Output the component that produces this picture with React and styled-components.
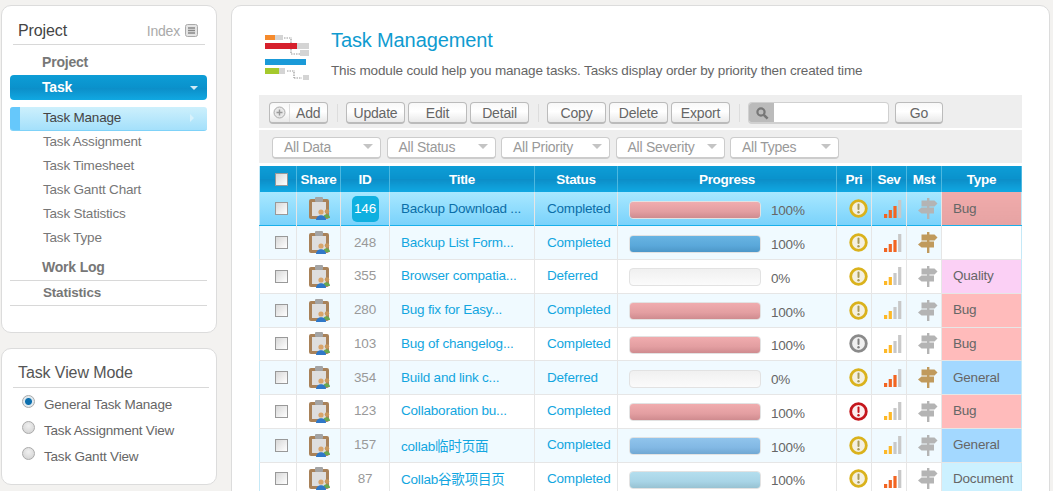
import React from "react";
import styled, { createGlobalStyle } from "styled-components";

const GlobalStyle = createGlobalStyle`
  html, body {
    margin: 0;
    height: 491px;
    overflow: hidden;
    background: #f3f2f0;
    font-family: "Liberation Sans", "Noto Sans CJK SC", Arial, sans-serif;
    font-size: 13.5px;
    letter-spacing: -0.2px;
    color: #666;
  }
`;

const navItems = [
  "Task Manage",
  "Task Assignment",
  "Task Timesheet",
  "Task Gantt Chart",
  "Task Statistics",
  "Task Type",
];

const viewModes = [
  { label: "General Task Manage", checked: true },
  { label: "Task Assignment View" },
  { label: "Task Gantt View" },
];

const typeColors = {
  Bug: "#ffbbbb",
  General: "#a3d8ff",
  Quality: "#fbd0f5",
  Document: "#ccf1ff",
};

const barColors = {
  red: ["#f0acae", "#e39ea1", "#cf8b8f"],
  blue: ["#68b4e2", "#5aa8da", "#4d97c8"],
  sky: ["#90c4ec", "#82b8e4", "#70a8d2"],
  pale: ["#b4deee", "#a8d4e6", "#98c2d2"],
};

const rows = [
  { id: 146, title: "Backup Download ...", status: "Completed", bar: "red", pct: 100, pri: "yellow", sev: "orange", mst: "gray", type: "Bug", active: true },
  { id: 248, title: "Backup List Form...", status: "Completed", bar: "blue", pct: 100, pri: "yellow", sev: "orange", mst: "brown", type: "" },
  { id: 355, title: "Browser compatia...", status: "Deferred", pct: 0, pri: "yellow", sev: "yellow", mst: "gray", type: "Quality" },
  { id: 280, title: "Bug fix for Easy...", status: "Completed", bar: "red", pct: 100, pri: "yellow", sev: "yellow", mst: "gray", type: "Bug" },
  { id: 103, title: "Bug of changelog...", status: "Completed", bar: "red", pct: 100, pri: "gray", sev: "yellow", mst: "gray", type: "Bug" },
  { id: 354, title: "Build and link c...", status: "Deferred", pct: 0, pri: "yellow", sev: "orange", mst: "brown", type: "General" },
  { id: 123, title: "Collaboration bu...", status: "Completed", bar: "red", pct: 100, pri: "red", sev: "yellow", mst: "gray", type: "Bug" },
  { id: 157, title: "collab临时页面", status: "Completed", bar: "sky", pct: 100, pri: "yellow", sev: "yellow", mst: "gray", type: "General" },
  { id: 87, title: "Collab谷歌项目页", status: "Completed", bar: "pale", pct: 100, pri: "yellow", sev: "orange", mst: "gray", type: "Document" },
];

const ModuleLogo = () => (
  <svg width="46" height="46" viewBox="0 0 46 46">
    <rect x="1" y="0" width="10" height="5" fill="#f58a2c" />
    <rect x="11" y="0" width="8" height="5" fill="#d4d4d4" />
    <path d="M20 3h8M27 4v14M27 19h9" stroke="#999" strokeWidth="1.2" strokeDasharray="1.5 1" fill="none" />
    <rect x="1" y="8" width="32" height="6" fill="#d6202c" />
    <rect x="33" y="8" width="12" height="6" fill="#d4d4d4" />
    <rect x="36" y="15" width="9" height="6" fill="#d4d4d4" />
    <rect x="1" y="24" width="41" height="6" fill="#1a9ad8" />
    <rect x="1" y="33" width="14" height="6" fill="#a5c92c" />
    <rect x="15" y="33" width="6" height="6" fill="#d4d4d4" />
    <path d="M23 36h8M30 37v6M30 43h8" stroke="#999" strokeWidth="1.2" strokeDasharray="1.5 1" fill="none" />
    <rect x="39" y="40" width="6" height="5" fill="#d4d4d4" />
  </svg>
);

const IndexIcon = () => (
  <svg width="13" height="13" viewBox="0 0 13 13">
    <rect x="0.5" y="0.5" width="12" height="12" rx="2" fill="#e4e4e4" stroke="#aaa" />
    <path d="M3 4h7M3 6.5h7M3 9h7" stroke="#888" strokeWidth="1.4" />
  </svg>
);

const ShareIcon = () => (
  <svg width="21" height="23" viewBox="0 0 21 23">
    <rect x="0" y="2" width="20" height="20" rx="2" fill="#a98259" />
    <rect x="3" y="5" width="14" height="14" fill="#dedede" />
    <rect x="6" y="0" width="8" height="5" rx="1" fill="#a4a4a4" />
    <circle cx="18" cy="14.5" r="2.3" fill="#c8985c" />
    <path d="M14 21c0-5 7-5 7 0z" fill="#6aa84f" />
    <circle cx="12" cy="15" r="2.6" fill="#d8a46a" />
    <path d="M7 23c0-6.5 10-6.5 10 0z" fill="#2f78c8" />
  </svg>
);

const priColors = {
  yellow: ["#dab21c", "#f4f0e0", "#a89a5a"],
  gray: ["#8a8a8a", "#f0f0f0", "#808080"],
  red: ["#c4161c", "#fbeeee", "#c4161c"],
};

const PriIcon = ({ level }) => {
  const [ring, fill, mark] = priColors[level];
  return (
    <svg width="19" height="19" viewBox="0 0 19 19">
      <circle cx="9.5" cy="9.5" r="7.8" fill={fill} stroke={ring} strokeWidth="2.8" />
      <rect x="8.5" y="4.5" width="2" height="6.5" rx="1" fill={mark} />
      <circle cx="9.5" cy="13.3" r="1.2" fill={mark} />
    </svg>
  );
};

const SevIcon = ({ tone }) => {
  const hot = tone === "orange" ? "#f26522" : "#fdb827";
  const lit = tone === "orange" ? 3 : 2;
  return (
    <svg width="18" height="18" viewBox="0 0 18 18">
      {[4, 8, 12, 18].map((h, i) => (
        <rect
          key={h}
          x={i * 4.7}
          y={18 - h}
          width="3.2"
          height={h}
          fill={i < lit ? hot : "#c8c8c8"}
        />
      ))}
    </svg>
  );
};

const MstIcon = ({ tone }) => {
  const c = tone === "brown" ? "#c09a5c" : "#b4b4b4";
  return (
    <svg width="20" height="21" viewBox="0 0 20 21">
      <rect x="9" y="0" width="2.4" height="21" fill={c} />
      <path d="M3.5 2.5h13l3 3-3 3h-13z" fill={c} />
      <path d="M16 9.5H3.5L0 12.5l3.5 3H16z" fill={c} />
    </svg>
  );
};

const SearchGlyph = () => (
  <svg width="14" height="14" viewBox="0 0 14 14">
    <circle cx="6" cy="6" r="3.6" fill="none" stroke="#777" strokeWidth="2.2" />
    <path d="M8.8 8.8l3.8 3.8" stroke="#777" strokeWidth="2.6" />
  </svg>
);

const AddGlyph = () => (
  <svg width="13" height="13" viewBox="0 0 13 13">
    <circle cx="6.5" cy="6.5" r="5.5" fill="#e8e8e8" stroke="#aaa" />
    <path d="M6.5 3.5v6M3.5 6.5h6" stroke="#999" strokeWidth="1.4" />
  </svg>
);

const App = () => (
  <Page>
    <GlobalStyle />
    <Sidebar>
      <NavPanel>
        <PanelHead>
          <PanelTitle>Project</PanelTitle>
          <IndexLink>
            Index <IndexIcon />
          </IndexLink>
        </PanelHead>
        <NavGroup>Project</NavGroup>
        <ActiveGroup>Task</ActiveGroup>
        <NavList>
          {navItems.map((item, i) => (
            <NavItem key={item} $active={i === 0}>
              {item}
            </NavItem>
          ))}
        </NavList>
        <RuledGroup>Work Log</RuledGroup>
        <RuledGroup $small>Statistics</RuledGroup>
      </NavPanel>
      <ModePanel>
        <ModeTitle>Task View Mode</ModeTitle>
        {viewModes.map((mode) => (
          <ModeRow key={mode.label}>
            <RadioDot $checked={mode.checked} />
            {mode.label}
          </ModeRow>
        ))}
      </ModePanel>
    </Sidebar>

    <Main>
      <Header>
        <LogoSlot>
          <ModuleLogo />
        </LogoSlot>
        <div>
          <Heading>Task Management</Heading>
          <Description>
            This module could help you manage tasks. Tasks display order by
            priority then created time
          </Description>
        </div>
      </Header>

      <ToolBar>
        <ToolGroup>
          <AddButton>
            <AddSlot>
              <AddGlyph />
            </AddSlot>
            Add
          </AddButton>
        </ToolGroup>
        <Divider />
        <ToolGroup>
          <ToolButton>Update</ToolButton>
          <ToolButton>Edit</ToolButton>
          <ToolButton>Detail</ToolButton>
        </ToolGroup>
        <Divider />
        <ToolGroup>
          <ToolButton>Copy</ToolButton>
          <ToolButton>Delete</ToolButton>
          <ToolButton>Export</ToolButton>
        </ToolGroup>
        <Divider />
        <SearchBox>
          <SearchSlot>
            <SearchGlyph />
          </SearchSlot>
        </SearchBox>
        <GoButton>Go</GoButton>
      </ToolBar>

      <FilterBar>
        {["All Data", "All Status", "All Priority", "All Severity", "All Types"].map((f) => (
          <FilterSelect key={f}>
            {f}
            <Caret />
          </FilterSelect>
        ))}
      </FilterBar>

      <TaskTable>
        <colgroup>
          {[37, 44, 49, 145, 83, 219, 35, 35, 35, 80].map((w, i) => (
            <col key={i} width={w} />
          ))}
        </colgroup>
        <thead>
          <tr>
            <HeadCell>
              <CheckBox />
            </HeadCell>
            {["Share", "ID", "Title", "Status", "Progress", "Pri", "Sev", "Mst", "Type"].map((h) => (
              <HeadCell key={h}>{h}</HeadCell>
            ))}
          </tr>
        </thead>
        <tbody>
          {rows.map((row, i) => (
            <Row key={row.id} $odd={i % 2 === 1} $active={row.active}>
              <CheckCell>
                <CheckBox />
              </CheckCell>
              <ShareCell>
                <ShareIcon />
              </ShareCell>
              <CenterCell>
                <IdBadge $active={row.active}>{row.id}</IdBadge>
              </CenterCell>
              <TitleCell $active={row.active}>{row.title}</TitleCell>
              <StatusCell $active={row.active}>{row.status}</StatusCell>
              <ProgressCell>
                <ProgressRow>
                  <Track>
                    {row.pct > 0 && (
                      <Fill $colors={barColors[row.bar]} style={{ width: `${row.pct}%` }} />
                    )}
                  </Track>
                  <PctLabel>{row.pct}%</PctLabel>
                </ProgressRow>
              </ProgressCell>
              <IconCell>
                <PriIcon level={row.pri} />
              </IconCell>
              <IconCell>
                <SevIcon tone={row.sev} />
              </IconCell>
              <IconCell>
                <MstIcon tone={row.mst} />
              </IconCell>
              <TypeCell $type={row.type} $active={row.active}>
                {row.type}
              </TypeCell>
            </Row>
          ))}
        </tbody>
      </TaskTable>
    </Main>
  </Page>
);

export default App;

const Page = styled.div`
  display: flex;
  align-items: flex-start;
  gap: 14px;
  padding: 5px 0 0 1px;
`;

const Sidebar = styled.aside`
  width: 216px;
  flex-shrink: 0;
  display: flex;
  flex-direction: column;
  gap: 15px;
`;

const NavPanel = styled.section`
  box-sizing: border-box;
  height: 328px;
  padding: 0 9px 0 8px;
  background: #fff;
  border: 1px solid #dcdcdc;
  border-radius: 10px;
`;

const PanelHead = styled.div`
  box-sizing: border-box;
  height: 39px;
  margin: 0 2px 0 3px;
  padding: 11px 7px 0 5px;
  display: flex;
  justify-content: space-between;
  align-items: center;
  border-bottom: 1px solid #d8d8d8;
`;

const PanelTitle = styled.div`
  font-size: 16px;
  letter-spacing: -0.1px;
  color: #444;
`;

const IndexLink = styled.div`
  display: flex;
  align-items: center;
  gap: 5px;
  font-size: 14px;
  color: #aaa;
`;

const NavGroup = styled.div`
  box-sizing: border-box;
  height: 30px;
  padding: 9px 0 0 32px;
  font-size: 14px;
  font-weight: bold;
  color: #777;
  line-height: 17px;
`;

const ActiveGroup = styled.div`
  box-sizing: border-box;
  height: 25px;
  padding-left: 32px;
  line-height: 24px;
  font-size: 14px;
  font-weight: bold;
  color: #fff;
  border-radius: 4px;
  position: relative;
  background: linear-gradient(#0d9dd6 0%, #0a92cc 50%, #0c8ec8 52%, #10a8e2 100%);

  &::after {
    content: "";
    position: absolute;
    right: 9px;
    top: 11px;
    border: 4px solid transparent;
    border-top: 4px solid #cfeaf6;
  }
`;

const NavList = styled.div`
  margin-top: 7px;
  margin-bottom: 5px;
`;

const NavItem = styled.div`
  box-sizing: border-box;
  height: 24px;
  line-height: 22px;
  padding-left: 33px;
  position: relative;
  color: ${(p) => (p.$active ? "#444" : "#777")};
  border-radius: 3px;
  ${(p) =>
    p.$active &&
    `
    background: linear-gradient(#cdf0fc, #a4e0fb);
    border-bottom: 1px solid #7fd2f8;

    &::before {
      content: "";
      position: absolute;
      left: 0;
      top: 0;
      bottom: 0;
      width: 10px;
      background: #66c8fb;
      border-radius: 3px 0 0 3px;
    }

    &::after {
      content: "";
      position: absolute;
      right: 9px;
      top: 7px;
      border: 4px solid transparent;
      border-left: 4px solid #d8f2fc;
    }
  `}
`;

const RuledGroup = styled.div`
  box-sizing: border-box;
  height: 25px;
  padding: 3px 0 0 ${(p) => (p.$small ? "33px" : "32px")};
  line-height: 17px;
  font-size: ${(p) => (p.$small ? "13.5px" : "14px")};
  font-weight: bold;
  color: #777;
  border-bottom: 1px solid #d8d8d8;
`;

const ModePanel = styled.section`
  box-sizing: border-box;
  height: 137px;
  padding: 0 7px 0 11px;
  background: #fff;
  border: 1px solid #dcdcdc;
  border-radius: 10px;
`;

const ModeTitle = styled.div`
  box-sizing: border-box;
  height: 39px;
  padding: 15px 0 0 5px;
  margin-bottom: 3px;
  font-size: 16px;
  letter-spacing: -0.1px;
  line-height: 18px;
  color: #555;
  border-bottom: 1px solid #d8d8d8;
`;

const ModeRow = styled.div`
  height: 26px;
  display: flex;
  align-items: center;
  gap: 9px;
  padding-left: 9px;
  color: #666;
`;

const RadioDot = styled.span`
  width: 11px;
  height: 11px;
  margin-top: -5px;
  border-radius: 50%;
  border: 1px solid #aaa;
  background: ${(p) =>
    p.$checked
      ? "radial-gradient(circle, #0c6fae 0 3px, #dfe9ef 4px)"
      : "radial-gradient(circle at 50% 35%, #f0f0f0, #cfcfcf)"};
`;

const Main = styled.main`
  box-sizing: border-box;
  width: 819px;
  height: 520px;
  flex-shrink: 0;
  padding: 0 27px;
  background: #fff;
  border: 1px solid #dcdcdc;
  border-radius: 10px 10px 0 0;
`;

const Header = styled.header`
  box-sizing: border-box;
  height: 89px;
  padding-top: 20px;
  display: flex;
`;

const LogoSlot = styled.div`
  width: 72px;
  padding: 9px 0 0 5px;
  box-sizing: border-box;
`;

const Heading = styled.h1`
  margin: 0;
  font-size: 20px;
  line-height: 28px;
  font-weight: normal;
  letter-spacing: -0.12px;
  color: #0f9bd0;
`;

const Description = styled.p`
  margin: 9px 0 0;
  line-height: 16px;
  letter-spacing: -0.155px;
  color: #666;
`;

const ToolBar = styled.div`
  box-sizing: border-box;
  width: 763px;
  height: 33px;
  padding: 3px 0 0 10px;
  display: flex;
  align-items: center;
  background: #eee;
`;

const ToolGroup = styled.div`
  display: flex;
  gap: 3px;
`;

const Divider = styled.span`
  width: 1px;
  height: 18px;
  margin: 0 8px 0 9px;
  background: #ddd;
`;

const ToolButton = styled.button`
  box-sizing: border-box;
  width: 59px;
  height: 22px;
  padding: 0;
  font: 14px "Liberation Sans", Arial, sans-serif;
  letter-spacing: -0.2px;
  color: #666;
  border: 1px solid #bbb;
  border-bottom-width: 2px;
  border-radius: 4px;
  background: linear-gradient(#f8f8f8, #ffffff 45%, #e9e9e9);
`;

const AddButton = styled(ToolButton)`
  display: flex;
  align-items: center;
  gap: 6px;
`;

const AddSlot = styled.span`
  width: 19px;
  height: 18px;
  display: flex;
  align-items: center;
  justify-content: center;
  border-right: 1px solid #ddd;
`;

const GoButton = styled(ToolButton)`
  width: 48px;
  margin-left: 6px;
`;

const SearchBox = styled.div`
  box-sizing: border-box;
  width: 141px;
  height: 22px;
  background: #fff;
  border: 1px solid #d0d0d0;
  border-bottom-width: 2px;
  border-radius: 4px;
  overflow: hidden;
`;

const SearchSlot = styled.div`
  width: 25px;
  height: 100%;
  display: flex;
  align-items: center;
  justify-content: center;
  background: #bbb;
`;

const FilterBar = styled.div`
  box-sizing: border-box;
  width: 763px;
  height: 33px;
  margin-top: 2px;
  padding: 2px 0 0 13px;
  display: flex;
  align-items: center;
  gap: 5.5px;
  background: #eee;
`;

const FilterSelect = styled.div`
  box-sizing: border-box;
  width: 109px;
  height: 22px;
  padding: 0 7px 0 11px;
  display: flex;
  align-items: center;
  justify-content: space-between;
  font-size: 14px;
  letter-spacing: -0.25px;
  color: #999;
  background: #fff;
  border: 1px solid #ccc;
  border-bottom-width: 2px;
  border-radius: 4px;
`;

const Caret = styled.span`
  width: 0;
  height: 0;
  margin-top: 4px;
  border: 5px solid transparent;
  border-top: 5px solid #c4c4c4;
`;

const TaskTable = styled.table`
  width: 762px;
  margin-top: 3px;
  table-layout: fixed;
  border-collapse: collapse;
  border-left: 1px solid #c5e9f7;
  border-right: 1px solid #c5e9f7;
`;

const HeadCell = styled.th`
  height: 26px;
  padding: 0;
  text-align: center;
  font-size: 13.5px;
  letter-spacing: -0.3px;
  font-weight: bold;
  color: #fff;
  background: linear-gradient(#0d9dd6 0%, #0a92cc 50%, #0c8ec8 52%, #10a8e2 100%);
  border-right: 1px solid #4db8e0;

  &:first-child {
    padding-left: 6px;
  }
`;

const CheckBox = styled.span`
  display: inline-block;
  box-sizing: border-box;
  width: 13px;
  height: 13px;
  vertical-align: middle;
  border: 1px solid #999;
  background: linear-gradient(135deg, #d8d8d8, #fff);
`;

const Row = styled.tr`
  height: 33.75px;
  background: ${(p) =>
    p.$active
      ? "linear-gradient(#a8e8ff, #7ad2fb)"
      : p.$odd
      ? "#f0faff"
      : "#fff"};
  border-bottom: ${(p) => (p.$active ? "1px solid #1ab0ea" : "1px solid #e6e6e6")};
`;

const CenterCell = styled.td`
  padding: 0;
  text-align: center;
  line-height: 0;
  border-right: 1px solid #e6e6e6;
`;

const CheckCell = styled(CenterCell)`
  padding-left: 6px;
`;

const ShareCell = styled(CenterCell)`
  padding-left: 2px;
`;

const IconCell = styled(CenterCell)`
  padding-left: 8px;
`;

const IdBadge = styled.span`
  display: inline-block;
  width: 27px;
  line-height: 26px;
  border-radius: 5px;
  color: ${(p) => (p.$active ? "#fff" : "#999")};
  background: ${(p) => (p.$active ? "#0fb0e0" : "transparent")};
`;

const TitleCell = styled.td`
  padding: 0 0 1px 11px;
  white-space: nowrap;
  overflow: hidden;
  color: ${(p) => (p.$active ? "#0a6ea8" : "#12a6e0")};
  border-right: 1px solid #e6e6e6;
`;

const StatusCell = styled(TitleCell)`
  padding-left: 12px;
`;

const ProgressCell = styled.td`
  padding: 2px 0 0 11px;
  border-right: 1px solid #e6e6e6;
`;

const ProgressRow = styled.div`
  display: flex;
  align-items: center;
  gap: 10px;
`;

const PctLabel = styled.span`
  padding-top: 2px;
`;

const Track = styled.div`
  box-sizing: border-box;
  width: 132px;
  height: 18px;
  overflow: hidden;
  background: linear-gradient(#f0f0f0, #fbfbfb);
  border: 1px solid #e2e2e2;
  border-radius: 4px;
`;

const Fill = styled.div`
  height: 100%;
  background: linear-gradient(
    ${(p) => p.$colors[0]},
    ${(p) => p.$colors[1]} 60%,
    ${(p) => p.$colors[2]}
  );
`;

const TypeCell = styled.td`
  padding: 0 0 1px 11px;
  color: #666;
  background: ${(p) => (p.$active ? "linear-gradient(#f0abab, #e6a3a3)" : typeColors[p.$type] || "#fff")};
`;
